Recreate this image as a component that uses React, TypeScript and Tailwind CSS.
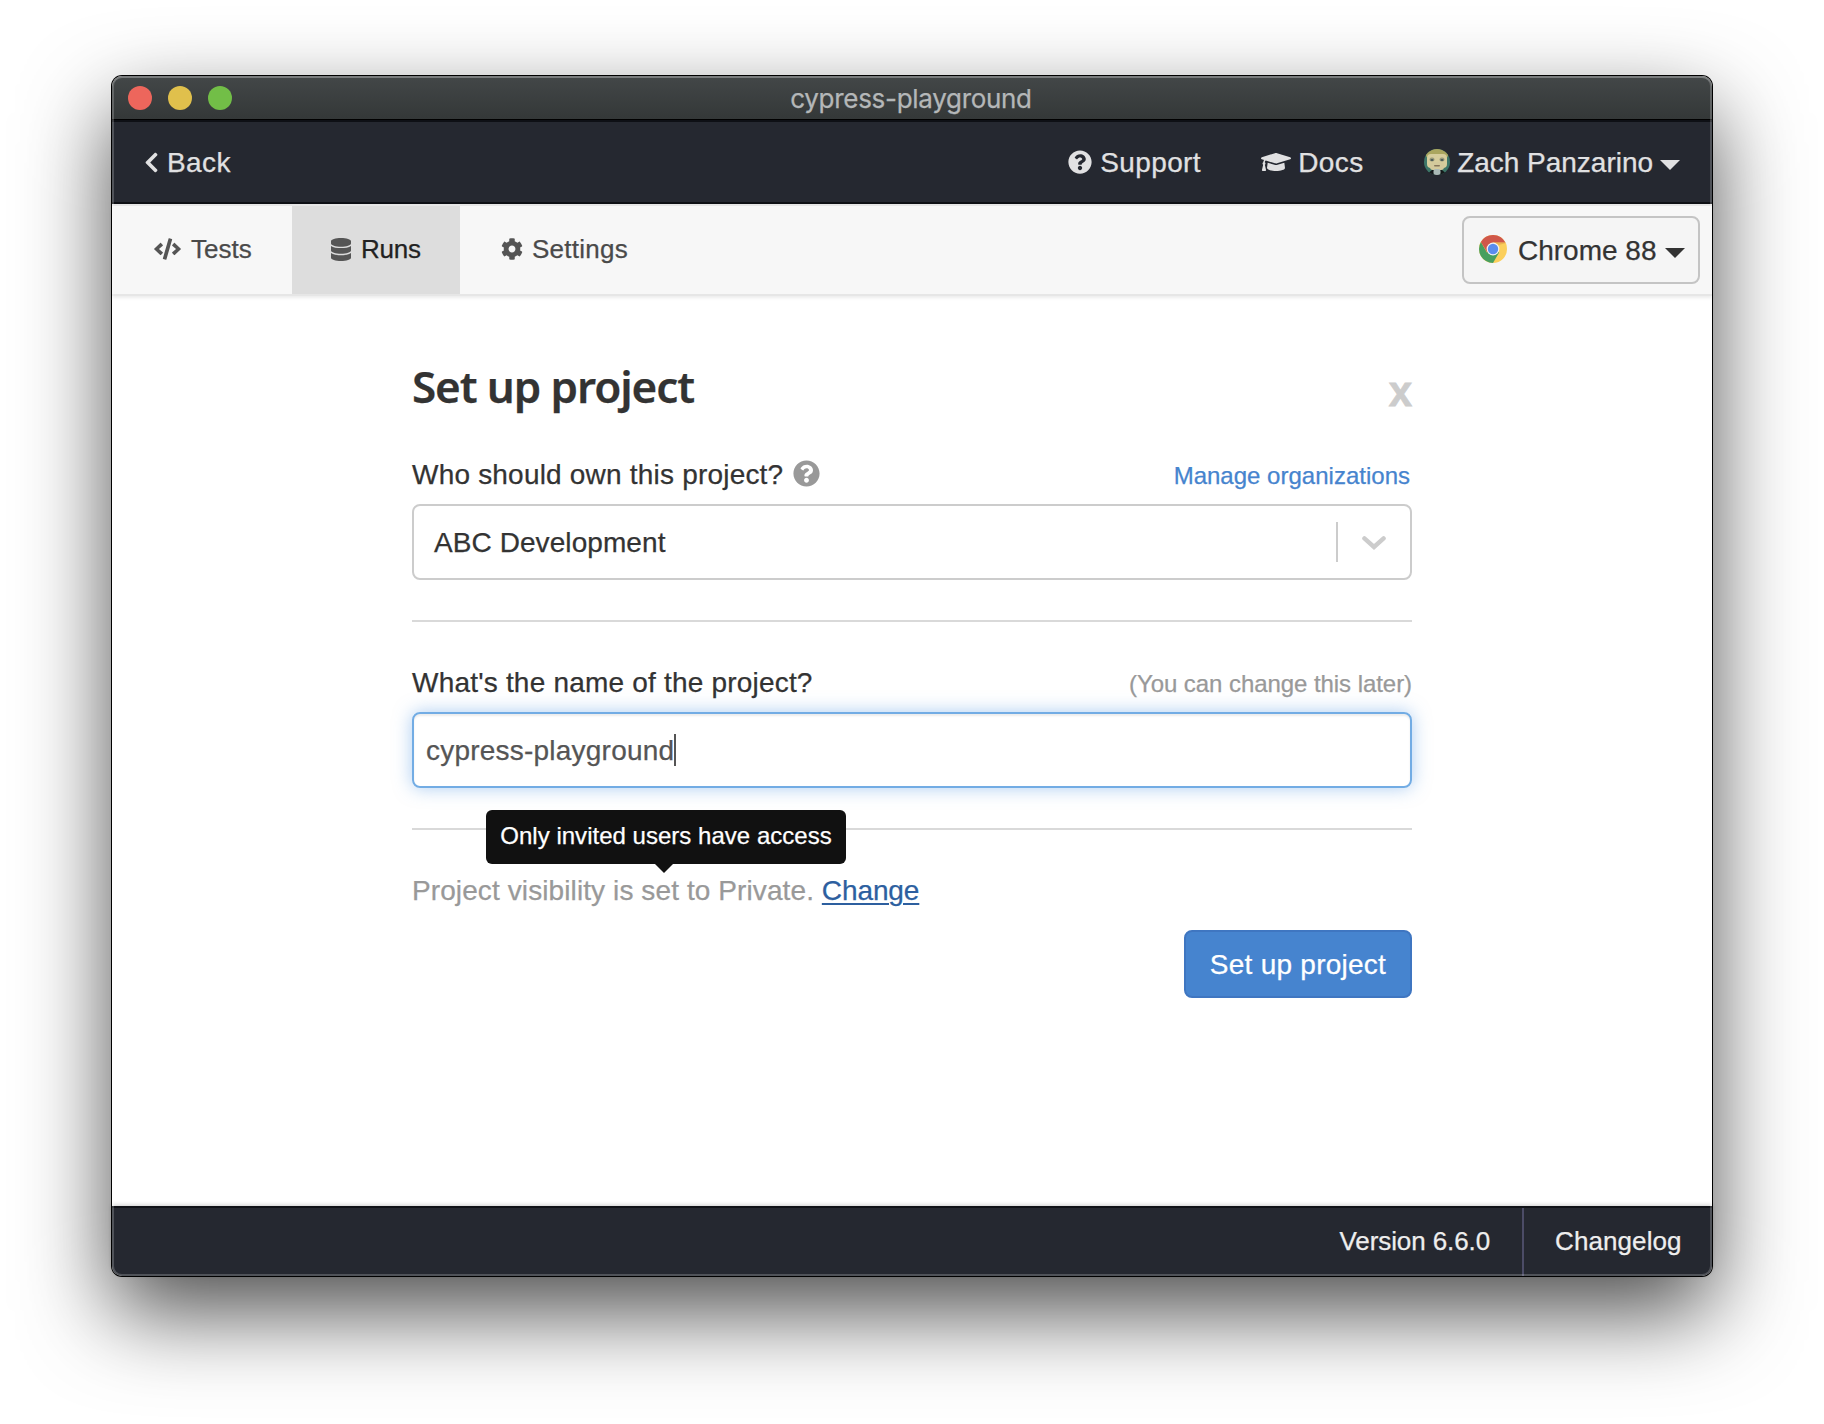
import React from "react";
import {
  FaChevronLeft,
  FaCode,
  FaCog,
  FaDatabase,
  FaGraduationCap,
  FaQuestionCircle,
} from "react-icons/fa";

function Caret({ className }: { className: string }) {
  return (
    <svg viewBox="0 0 20 10" className={`h-[10px] w-5 ${className}`} fill="currentColor">
      <path d="M0 0H20L10 10Z" />
    </svg>
  );
}

function ChromeLogo() {
  return (
    <svg viewBox="0 0 28 28" className="size-7 -translate-y-px">
      <circle cx="14" cy="14" r="14" fill="#fbcf5c" />
      <path d="M14 14 7.9 17.6 1.9 7A14 14 0 0 0 14 28L20.1 17.5Z" fill="#479f5f" />
      <path d="M14 7.5H26.4A14 14 0 0 0 1.9 7L8.3 17.5Z" fill="#d0574a" />
      <path d="M14 7.5H26.4L26.6 8.3 19.5 10Z" fill="#e0a04a" opacity=".6" />
      <circle cx="14" cy="14" r="6.4" fill="#f3f3f3" />
      <circle cx="14" cy="14" r="5.2" fill="#5a8cee" />
    </svg>
  );
}

function Avatar() {
  return (
    <svg viewBox="0 0 26 26" className="size-[26px] rounded-full">
      <rect width="26" height="26" fill="#3d7668" />
      <rect x="2" y="0" width="22" height="9" rx="3" fill="#aaa65f" />
      <rect x="3" y="5" width="20" height="14" rx="4" fill="#d6cd9c" />
      <rect x="6" y="13" width="14" height="8" rx="3" fill="#d3ca9c" />
      <rect x="5.500" y="8.500" width="5" height="4" rx="2" fill="#9a9c7c" />
      <rect x="15.500" y="8.500" width="5" height="4" rx="2" fill="#9a9c7c" />
      <rect x="6.500" y="10" width="3" height="2" rx="1" fill="#4c5c58" />
      <rect x="16.500" y="10" width="3" height="2" rx="1" fill="#4c5c58" />
      <rect x="10" y="16" width="6" height="1.600" rx="0.800" fill="#85765a" />
      <path d="M2 26 8 21H18L24 26Z" fill="#15191a" />
      <rect x="9.500" y="20" width="7" height="6" rx="2" fill="#a9b9b6" />
    </svg>
  );
}

export default function App() {
  return (
    <div className="h-[1424px] w-[1824px] overflow-hidden bg-white px-28 pt-[76px] font-['Liberation_Sans',Arial,sans-serif] text-[28px] leading-10 text-[#333] [-webkit-text-stroke:0.25px]">
      <div className="relative flex h-[1200px] w-[1600px] flex-col rounded-[10px] bg-white shadow-[0_0_0_1px_#000,0_36px_88px_rgba(0,0,0,0.7)]">
        {/* Title bar */}
        <div className="relative flex h-11 shrink-0 items-center justify-center rounded-t-[10px] border-b border-black bg-linear-to-b from-[#434748] to-[#343838]">
          <div className="absolute left-4 top-[10px] flex gap-4">
            <span className="size-6 rounded-full bg-[#ed665c]" />
            <span className="size-6 rounded-full bg-[#e0c04c]" />
            <span className="size-6 rounded-full bg-[#72be47]" />
          </div>
          <span className="mr-[2px] pt-[2px] font-['Inter',sans-serif] text-[26px] leading-[40px] tracking-[-0.3px] text-[#b4b7b8]">
            cypress-playground
          </span>
        </div>

        {/* Navigation */}
        <nav className="flex h-[84px] shrink-0 items-center border-y-2 border-[#0e1015] bg-[#252830] text-[#e1e1e2]">
          <a className="ml-7 flex items-center">
            <FaChevronLeft className="size-[23px]" />
            <span className="ml-1 pt-[2px] tracking-[0.4px]">Back</span>
          </a>
          <div className="ml-auto flex items-center">
            <a className="flex w-[193px] items-center gap-2">
              <FaQuestionCircle className="size-6" />
              <span className="pt-[2px] tracking-[0.4px]">Support</span>
            </a>
            <a className="flex w-[163px] items-center gap-[7px]">
              <FaGraduationCap className="h-6 w-[30px]" />
              <span className="pt-[2px] tracking-[0.4px]">Docs</span>
            </a>
            <a className="mr-8 flex items-center">
              <Avatar />
              <span className="ml-[7px] pt-[2px] tracking-[-0.02px]">Zach Panzarino</span>
              <Caret className="ml-[7px] mt-[5px]" />
            </a>
          </div>
        </nav>

        {/* Tabs */}
        <div className="flex h-[92px] shrink-0 border-y-2 border-[#e6e6e6] bg-[#f7f7f7] text-[26px] text-[#4a4a4a] shadow-[0_2px_3px_rgba(0,0,0,0.08)]">
          <a className="flex w-[180px] items-center pb-[2px] pl-[42px]">
            <FaCode className="h-[22px] w-[27px] text-[#555]" />
            <span className="ml-[10px]">Tests</span>
          </a>
          <a className="flex w-[168px] items-center bg-[#ddd] pb-[2px] pl-[39px] text-[#222]">
            <FaDatabase className="h-[23px] w-5 text-[#555]" />
            <span className="ml-[10px] tracking-[-0.2px]">Runs</span>
          </a>
          <a className="flex items-center pb-[2px] pl-[41px]">
            <FaCog className="size-[22px] text-[#555]" />
            <span className="ml-[9px] tracking-[0.25px]">Settings</span>
          </a>
          <button className="ml-auto mr-3 mt-[10px] flex h-[68px] w-[238px] items-center rounded-lg border-2 border-[#c4c4c4] bg-[#f5f5f5] pl-[15px] text-[28px] text-[#333]">
            <ChromeLogo />
            <span className="ml-[11px] mt-[1px]">Chrome 88</span>
            <Caret className="ml-[8px] mt-[5px]" />
          </button>
        </div>

        {/* Setup form */}
        <main className="mx-auto flex w-[1000px] grow flex-col">
          <div className="mt-[60px] flex h-[60px] items-center justify-between">
            <h1 className="font-['Noto_Sans','Open_Sans',sans-serif] text-[44px] font-semibold leading-[60px] tracking-[-1.1px] text-[#333]">
              Set up project
            </h1>
            <button className="mt-[11px] text-[42px] font-bold leading-[48px] text-[#ccc] [-webkit-text-stroke:0.8px]">x</button>
          </div>

          <div className="mt-[39px] flex h-10 items-center justify-between">
            <label className="flex items-center tracking-[0.2px]">
              Who should own this project?
              <FaQuestionCircle className="mb-[3px] ml-[10px] size-[27px] text-[#999]" />
            </label>
            <a className="mr-[2px] mt-[2px] text-[24px] tracking-[0.01px] text-[#4684ce]">Manage organizations</a>
          </div>
          <div className="mt-[9px] flex h-[76px] items-center rounded-lg border-2 border-[#ccc] pl-5">
            <span className="pt-[2px] tracking-[0.08px]">ABC Development</span>
            <span className="ml-auto h-10 w-[2px] bg-[#ccc]" />
            <svg viewBox="0 0 24 14" className="ml-6 mr-6 mt-[2px] h-[14px] w-6" fill="none" stroke="#ccc" strokeWidth="4.400" strokeLinecap="round">
              <path d="M2.400 2.400 12 11 21.600 2.400" />
            </svg>
          </div>

          <hr className="mt-10 border-t-2 border-[#d9d9d9]" />

          <div className="mt-[41px] flex h-10 items-center justify-between">
            <label className="tracking-[0.2px]">What's the name of the project?</label>
            <span className="mt-[2px] text-[24px] tracking-[-0.06px] text-[#999]">(You can change this later)</span>
          </div>
          <div className="mt-[9px] flex h-[76px] items-center rounded-lg border-2 border-[#72ace4] pl-3 text-[#555] shadow-[inset_0_2px_2px_rgba(0,0,0,0.075),0_0_18px_rgba(90,155,230,0.5)]">
            <span className="pt-[2px] tracking-[0.22px]">cypress-playground</span>
            <span className="h-8 w-[2px] bg-[#555]" />
          </div>

          <hr className="mt-10 border-t-2 border-[#d9d9d9]" />

          <div className="relative mt-[41px] h-10 text-[#999]">
            <span className="tracking-[0.1px]">Project visibility is set to Private.</span>{" "}
            <a className="tracking-[-0.1px] text-[#2d5f9f] underline decoration-2 underline-offset-[3px]">Change</a>
            <div className="absolute -top-[61px] left-[74px] flex h-[54px] w-[360px] items-center justify-center rounded-md bg-[#111] pb-[2px] text-[24px] leading-8 tracking-[0.02px] text-white">
              Only invited users have access
              <svg viewBox="0 0 18 9" className="absolute left-[169px] top-[54px] h-[9px] w-[18px]">
                <path d="M0 0H18L9 9Z" fill="#111" />
              </svg>
            </div>
          </div>

          <button className="mt-[19px] h-[68px] w-[228px] self-end rounded-lg border-2 border-[#3f76c1] bg-[#4684cf] pt-[2px] tracking-[0.25px] text-white">
            Set up project
          </button>
        </main>

        {/* Footer */}
        <footer className="flex h-[70px] shrink-0 justify-end rounded-b-[10px] border-t-2 border-[#101217] bg-[#252830] text-[26px] text-[#eee] shadow-[0_-1px_4px_rgba(0,0,0,0.2)]">
          <span className="flex items-center border-r-2 border-[#4c4c66] pb-[2px] pr-8 tracking-[-0.1px]">Version 6.6.0</span>
          <span className="flex w-[188px] items-center pb-[2px] pl-[31px] tracking-[0.1px]">Changelog</span>
        </footer>

        {/* Bevel on the window edge */}
        <div className="pointer-events-none absolute inset-0 rounded-[10px] shadow-[inset_0_0_0_2px_rgba(255,255,255,0.2),inset_0_2px_0_rgba(255,255,255,0.12)]" />
      </div>
    </div>
  );
}
